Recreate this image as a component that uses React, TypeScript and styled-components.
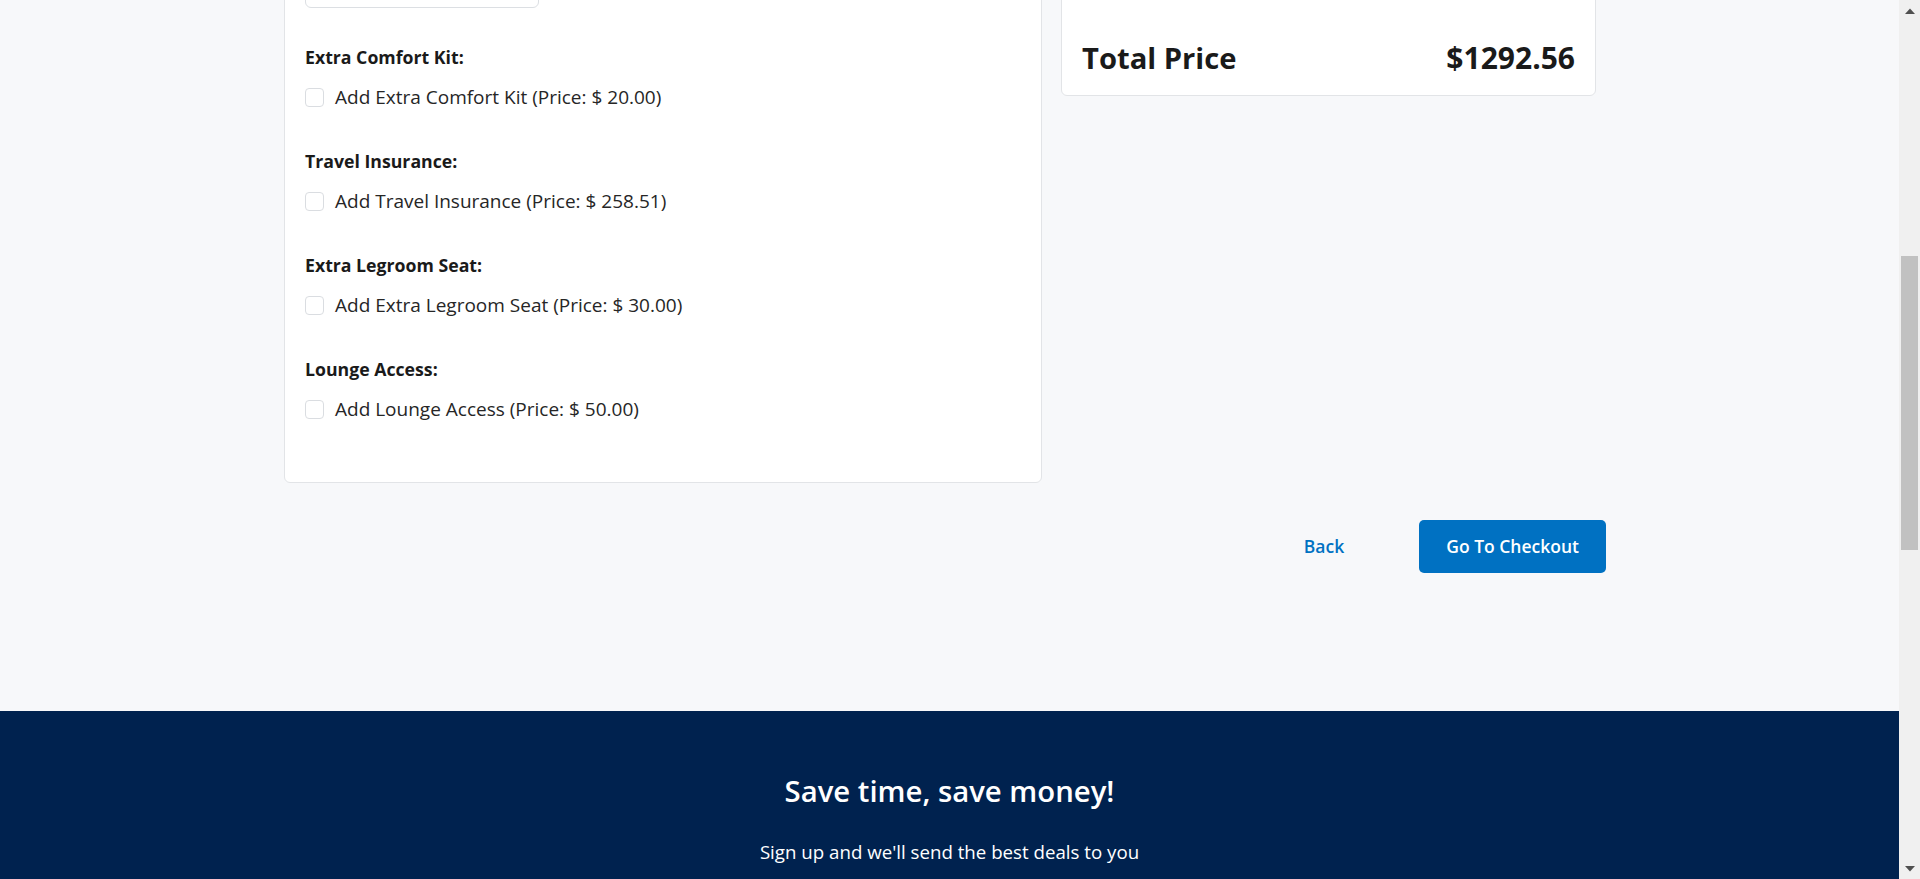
import React from "react";
import styled, { createGlobalStyle } from "styled-components";

const GlobalStyle = createGlobalStyle`
  html, body {
    margin: 0;
    padding: 0;
    height: 100%;
    overflow: hidden;
  }
  body {
    background: #f7f8fa;
    font-family: "Open Sans", "Noto Sans", sans-serif;
    color: #1a1a1a;
  }
  #root { height: 100%; }
  *, *::before, *::after { box-sizing: border-box; }
`;

const Shell = styled.div`
  display: flex;
  height: 879px;
  overflow: hidden;
`;

const Viewport = styled.div`
  flex: 1;
  min-width: 0;
  overflow: hidden;
  display: flex;
  flex-direction: column;
`;

/* the window is scrolled: the page above the visible part is offset */
const ScrolledPage = styled.div<{ $offset: number }>`
  margin-top: -${(p) => p.$offset}px;
  display: flex;
  flex-direction: column;
`;

const Main = styled.main`
  width: 1331px;
  margin: 0 auto;
  padding-bottom: 138px;
`;

const Columns = styled.div`
  display: grid;
  grid-template-columns: 758px 535px;
  gap: 19px;
  align-items: start;
`;

const Card = styled.section<{ $padBottom?: number }>`
  background: #ffffff;
  border: 1px solid #e2e4e7;
  border-radius: 6px;
  padding: 20px 20px ${(p) => p.$padBottom ?? 20}px;
`;

const Section = styled.div`
  margin-bottom: 36px;
`;

const SectionLabel = styled.h4`
  margin: 0 0 11px;
  font-size: 17.7px;
  line-height: 27px;
  font-weight: 700;
  color: #1a1a1a;
`;

const SelectBox = styled.div`
  width: 234px;
  height: 47px;
  display: flex;
  align-items: center;
  padding: 0 14px;
  border: 1px solid #dcdfe3;
  border-radius: 6px;
  background: #fff;
  font-size: 19px;
  color: #262626;
`;

const OptionRow = styled.label`
  display: flex;
  align-items: center;
  gap: 11px;
  height: 30px;
  font-size: 19px;
  line-height: 30px;
  color: #262626;
  cursor: pointer;
`;

const Checkbox = styled.input.attrs({ type: "checkbox" })`
  appearance: none;
  -webkit-appearance: none;
  margin: 0;
  width: 19px;
  height: 19px;
  flex: none;
  border: 1px solid #dadde1;
  border-radius: 4px;
  background: #fff;
`;

const SummaryTitle = styled.div`
  font-size: 19px;
  line-height: 30px;
  font-weight: 700;
`;

const SummaryRow = styled.div`
  display: flex;
  justify-content: space-between;
  font-size: 19px;
  line-height: 30px;
  color: #262626;
`;

const TotalRow = styled.div`
  display: flex;
  justify-content: space-between;
  align-items: baseline;
  margin-top: 58px;
  font-size: 30px;
  line-height: 33.5px;
  font-weight: 700;
  color: #1a1a1a;
`;

const TotalLabel = styled.span`
  font-size: 29.2px;
`;

const Actions = styled.div`
  display: flex;
  justify-content: flex-end;
  align-items: center;
  gap: 48px;
  margin-top: 37px;
  padding-right: 9px;
`;

const Button = styled.button<{ $primary?: boolean }>`
  height: 53px;
  padding: 0 27px;
  border: none;
  border-radius: 5px;
  font-family: inherit;
  font-size: 17.5px;
  font-weight: 600;
  line-height: 27px;
  cursor: pointer;
  background: ${(p) => (p.$primary ? "#0071c2" : "transparent")};
  color: ${(p) => (p.$primary ? "#ffffff" : "#0071c2")};
`;

const Footer = styled.footer`
  background: #00224f;
  color: #ffffff;
  text-align: center;
  padding: 62px 0 240px;
`;

const FooterTitle = styled.h2`
  margin: 0 0 28px;
  font-size: 29.3px;
  line-height: 36px;
  font-weight: 600;
`;

const FooterText = styled.p`
  margin: 0;
  font-size: 18.7px;
  line-height: 29px;
`;

/* browser scrollbar */
const ScrollRail = styled.div`
  width: 21px;
  flex: none;
  display: flex;
  flex-direction: column;
  background: #f0f0f0;
`;

const ArrowButton = styled.div`
  height: 21px;
  display: flex;
  align-items: center;
  justify-content: center;
  padding-left: 1px;
`;

const Track = styled.div`
  flex: 1;
  display: flex;
  flex-direction: column;
`;

const Thumb = styled.div<{ $top: number; $size: number }>`
  margin: ${(p) => p.$top}px 2px 0;
  height: ${(p) => p.$size}px;
  background: #c1c1c1;
`;

const Arrow = ({ down }: { down?: boolean }) => (
  <svg width="10" height="6" viewBox="0 0 10 6">
    <polygon points={down ? "0,0 10,0 5,5.5" : "5,0.5 10,6 0,6"} fill="#505050" />
  </svg>
);

const extras = [
  { title: "Extra Comfort Kit", price: "20.00" },
  { title: "Travel Insurance", price: "258.51" },
  { title: "Extra Legroom Seat", price: "30.00" },
  { title: "Lounge Access", price: "50.00" },
];

export default function App() {
  return (
    <>
      <GlobalStyle />
      <Shell>
        <Viewport>
          <ScrolledPage $offset={98}>
            <Main>
              <Columns>
                <Card $padBottom={22}>
                  <Section>
                    <SectionLabel>Meal Preference:</SectionLabel>
                    <SelectBox>Standard</SelectBox>
                  </Section>
                  {extras.map((e) => (
                    <Section key={e.title}>
                      <SectionLabel>{e.title}:</SectionLabel>
                      <OptionRow>
                        <Checkbox />
                        Add {e.title} (Price: $ {e.price})
                      </OptionRow>
                    </Section>
                  ))}
                </Card>
                <Card $padBottom={19}>
                  <SummaryTitle>Price Summary</SummaryTitle>
                  <SummaryRow>
                    <span>Base Fare</span>
                    <span>$934.05</span>
                  </SummaryRow>
                  <TotalRow>
                    <TotalLabel>Total Price</TotalLabel>
                    <span>$1292.56</span>
                  </TotalRow>
                </Card>
              </Columns>
              <Actions>
                <Button>Back</Button>
                <Button $primary>Go To Checkout</Button>
              </Actions>
            </Main>
            <Footer>
              <FooterTitle>Save time, save money!</FooterTitle>
              <FooterText>Sign up and we'll send the best deals to you</FooterText>
            </Footer>
          </ScrolledPage>
        </Viewport>
        <ScrollRail>
          <ArrowButton>
            <Arrow />
          </ArrowButton>
          <Track>
            <Thumb $top={235} $size={294} />
          </Track>
          <ArrowButton>
            <Arrow down />
          </ArrowButton>
        </ScrollRail>
      </Shell>
    </>
  );
}
